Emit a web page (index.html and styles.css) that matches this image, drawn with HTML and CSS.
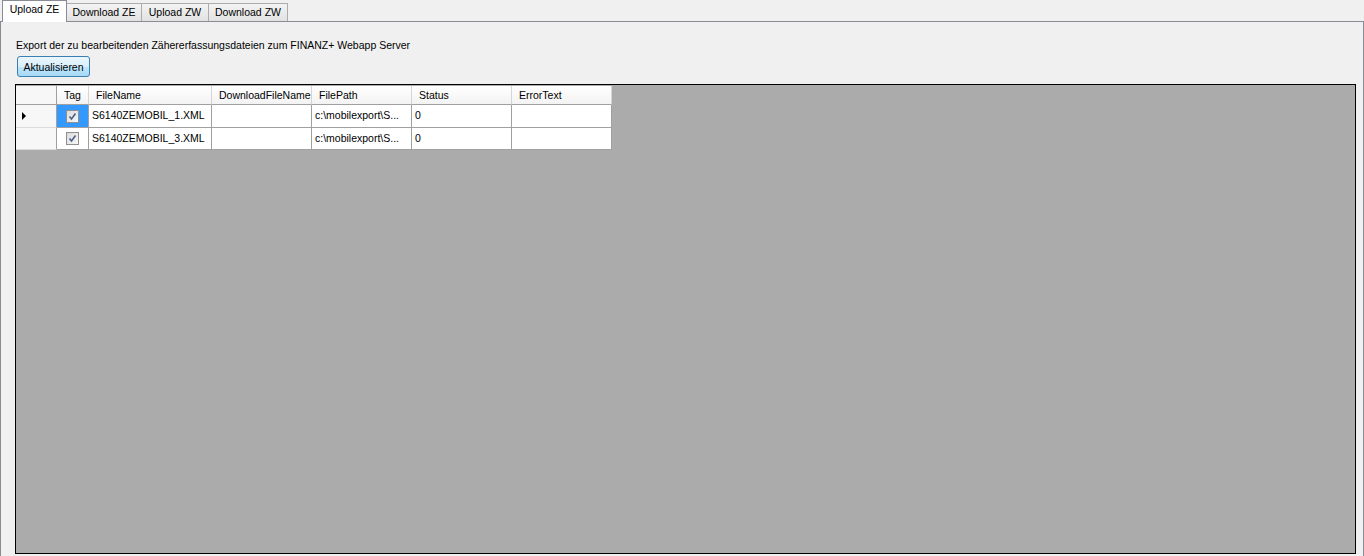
FILE: index.html
```html
<!DOCTYPE html>
<html lang="de">
<head>
    <meta charset="UTF-8">
    <title>Upload ZE</title>
    <link rel="stylesheet" href="styles.css">
</head>
<body>
    <div class="tabstrip">
        <div class="tab active tab-upload-ze">Upload ZE</div>
        <div class="tab tab-download-ze">Download ZE</div>
        <div class="tab tab-upload-zw">Upload ZW</div>
        <div class="tab tab-download-zw">Download ZW</div>
    </div>
    <div class="tab-page">
        <div class="caption">Export der zu bearbeitenden Zähererfassungsdateien zum FINANZ+ Webapp Server</div>
        <div class="button-row">
            <button class="refresh">Aktualisieren</button>
        </div>
        <div class="grid-view">
            <div class="grid">
                <!-- header -->
                <div class="hdr corner"></div>
                <div class="hdr center">Tag</div>
                <div class="hdr">FileName</div>
                <div class="hdr">DownloadFileName</div>
                <div class="hdr">FilePath</div>
                <div class="hdr">Status</div>
                <div class="hdr">ErrorText</div>

                <!-- row 1 -->
                <div class="row-hdr"><span class="current-arrow"></span></div>
                <div class="cell check selected"><span class="checkbox"><svg width="9" height="9" viewBox="0 0 9 9"><path d="M1.5 4.5 L3.5 7 L7.5 1.5" fill="none" stroke="#4a5f8a" stroke-width="1.6"/></svg></span></div>
                <div class="cell">S6140ZEMOBIL_1.XML</div>
                <div class="cell"></div>
                <div class="cell">c:\mobilexport\S...</div>
                <div class="cell">0</div>
                <div class="cell"></div>

                <!-- row 2 -->
                <div class="row-hdr"></div>
                <div class="cell check"><span class="checkbox"><svg width="9" height="9" viewBox="0 0 9 9"><path d="M1.5 4.5 L3.5 7 L7.5 1.5" fill="none" stroke="#4a5f8a" stroke-width="1.6"/></svg></span></div>
                <div class="cell">S6140ZEMOBIL_3.XML</div>
                <div class="cell"></div>
                <div class="cell">c:\mobilexport\S...</div>
                <div class="cell">0</div>
                <div class="cell"></div>
            </div>
        </div>
    </div>
</body>
</html>
```

FILE: styles.css
```css
html, body {
    margin: 0;
    padding: 0;
    height: 100%;
    overflow: hidden;
}
body {
    background-color: #f0f0f0;
    font-family: 'Liberation Sans', Arial, sans-serif;
    font-size: 10.5px;
    color: #000;
}

/* Tab strip */
.tabstrip {
    display: flex;
    align-items: flex-end;
    height: 21px;
    padding-left: 2px;
    box-sizing: border-box;
}
.tab {
    box-sizing: border-box;
    height: 18px;
    padding-top: 2px;
    line-height: 13px;
    text-align: center;
    border: 1px solid #acacac;
    border-bottom: none;
    background: linear-gradient(#f3f3f3, #e2e2e2);
    margin-left: -1px;
    white-space: nowrap;
}
.tab.active {
    height: 22px;
    margin-bottom: -1px;
    margin-left: 0;
    background: #ffffff;
    border-color: #898c95;
    position: relative;
    z-index: 1;
}
.tab-upload-ze { width: 65px; }
.tab-download-ze { width: 76px; }
.tab-upload-zw { width: 68px; }
.tab-download-zw { width: 80px; }

/* Tab page */
.tab-page {
    box-sizing: border-box;
    height: 537px;
    border: 1px solid #898c95;
    background-color: #f0f0f0;
    padding: 17px 7px 0 14px;
    display: flex;
    flex-direction: column;
}
.caption {
    line-height: 13px;
    padding-left: 1px;
}
.button-row {
    margin-top: 4px;
}
.refresh {
    font-family: 'Liberation Sans', Arial, sans-serif;
    font-size: 10.5px;
    color: #000;
    width: 73px;
    height: 21px;
    margin-left: 2px;
    padding: 0;
    border: 1px solid #3c7fb1;
    border-radius: 3px;
    background: linear-gradient(#eaf6fd 0%, #d9effc 50%, #bee6fd 51%, #a7d9f5 100%);
}

/* Data grid */
.grid-view {
    margin-top: 7px;
    height: 470px;
    box-sizing: border-box;
    border: 1px solid #000;
    padding-top: 1px;
    background-color: #ababab;
}
.grid {
    display: grid;
    grid-template-columns: 41px 32px 123px 100px 100px 100px 100px;
    grid-template-rows: 19px 23px 22px;
    width: 596px;
}
.hdr {
    box-sizing: border-box;
    background: linear-gradient(#ffffff, #f3f3f3);
    border-right: 1px solid #d5d5d5;
    border-bottom: 1px solid #a0a0a0;
    padding-left: 7px;
    line-height: 19px;
    white-space: nowrap;
    overflow: hidden;
}
.hdr.corner {
    border-right-color: #a0a0a0;
    background: #f7f7f7;
}
.hdr.center {
    padding-left: 0;
    text-align: center;
}
.row-hdr {
    box-sizing: border-box;
    background-color: #f7f7f7;
    border-right: 1px solid #a0a0a0;
    border-bottom: 1px solid #dcdcdc;
    display: flex;
    align-items: center;
    padding-left: 6px;
}
.current-arrow {
    width: 0;
    height: 0;
    border-left: 4px solid #000;
    border-top: 4px solid transparent;
    border-bottom: 4px solid transparent;
}
.cell {
    box-sizing: border-box;
    background-color: #ffffff;
    border-right: 1px solid #a0a0a0;
    border-bottom: 1px solid #a0a0a0;
    padding-left: 3px;
    line-height: 21px;
    white-space: nowrap;
    overflow: hidden;
}
.cell.check {
    display: flex;
    align-items: center;
    justify-content: center;
    padding-left: 0;
}
.cell.selected {
    background-color: #3399ff;
}
.checkbox {
    box-sizing: border-box;
    width: 13px;
    height: 13px;
    border: 1px solid #8e8f8f;
    background: linear-gradient(135deg, #dcdcdc, #f6f6f6);
    display: flex;
    align-items: center;
    justify-content: center;
}
.checkbox svg {
    display: block;
}
```
